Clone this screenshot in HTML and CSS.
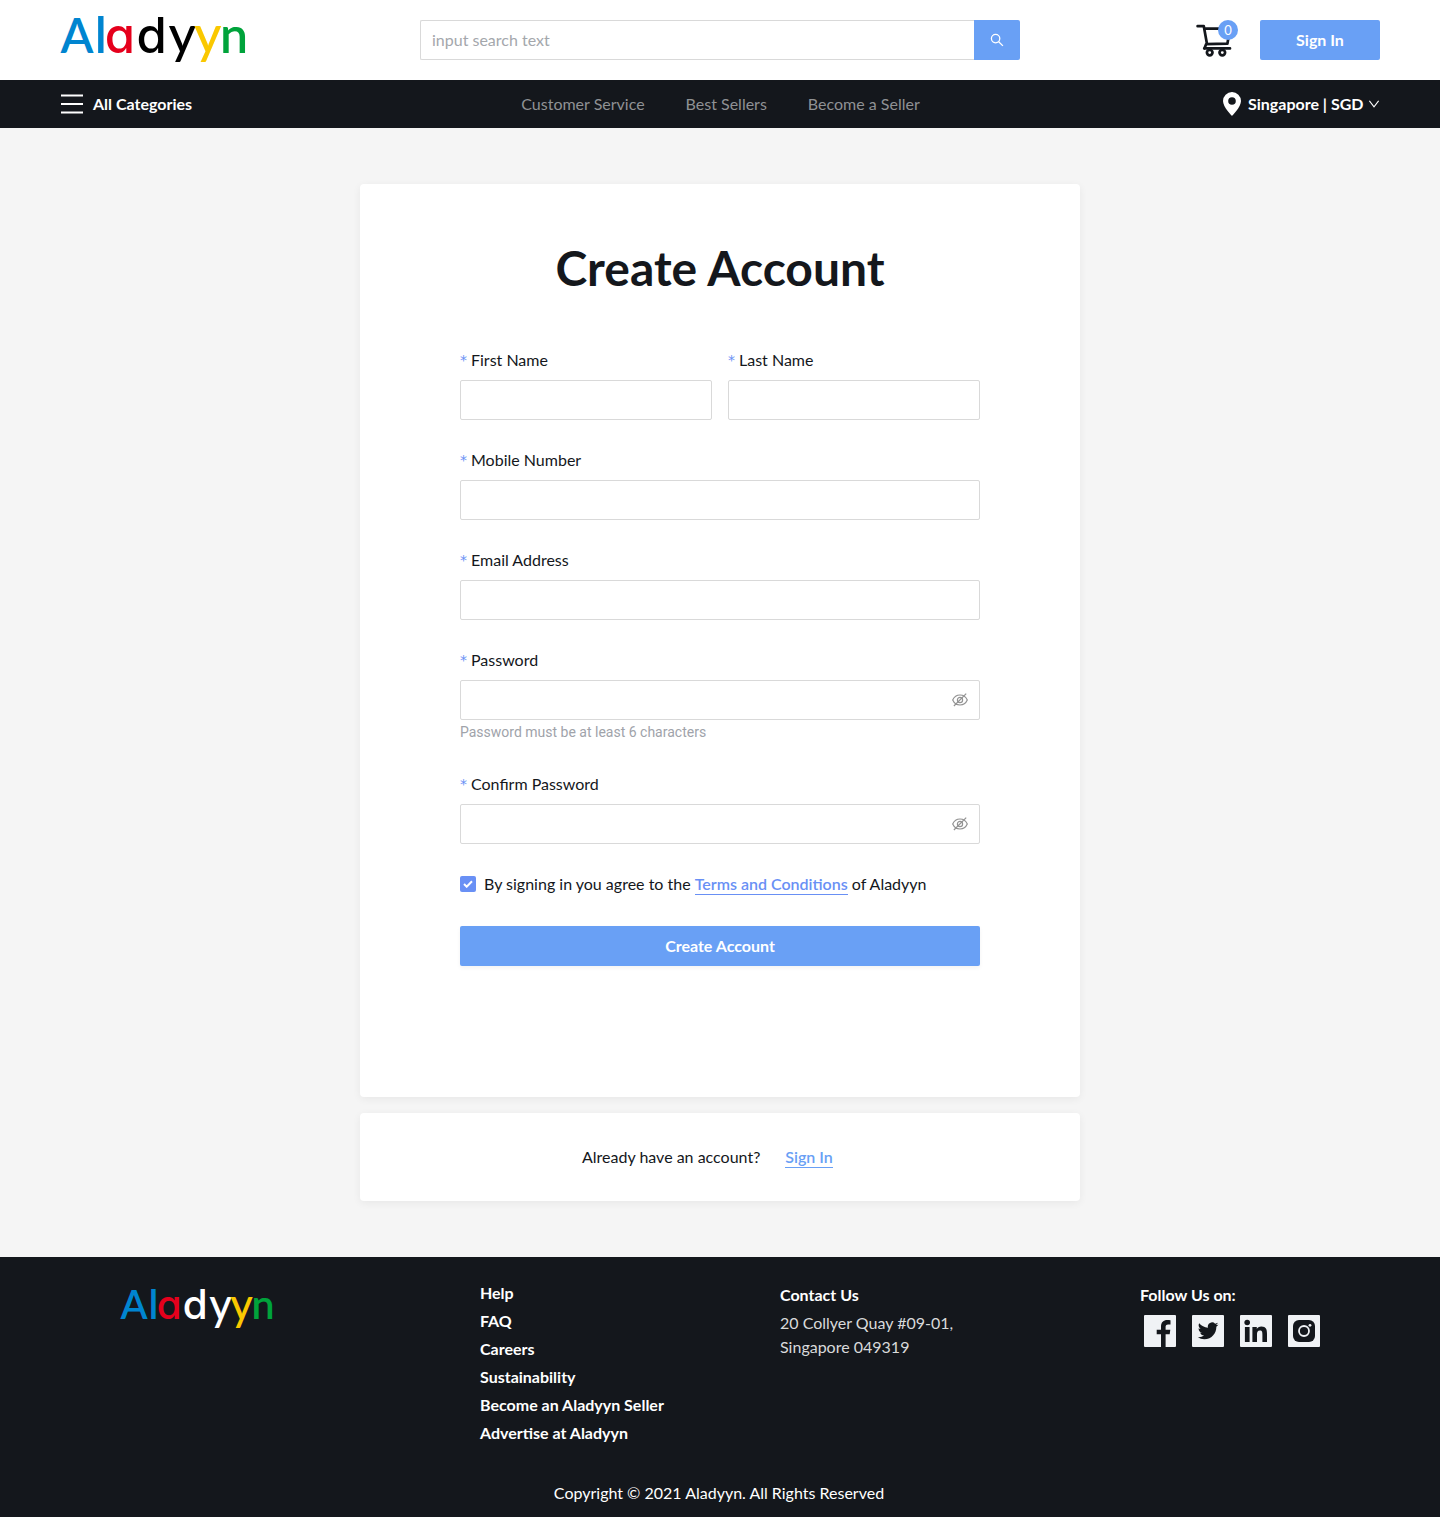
FILE: index.html
```html
<!DOCTYPE html>
<html lang="en">
<head>
<meta charset="utf-8">
<title>Create Account - Aladyyn</title>
<link rel="stylesheet" href="styles.css">
</head>
<body>
<header class="topbar">
  <svg class="logo" viewBox="0 0 186 48" width="186" height="48">
    <text y="36.5"><tspan class="blue" x="0.5">A</tspan><tspan class="blue tall" x="34.700">l</tspan><tspan class="red round" x="44.800">a</tspan><tspan class="ink round" x="76.400">d</tspan><tspan class="ink tail" x="108.400" y="37">y</tspan><tspan class="yellow tail" x="134" y="37">y</tspan><tspan class="green tall" x="160" y="36.5">n</tspan></text>
  </svg>
  <div class="search">
    <input class="search-input" type="text" placeholder="input search text">
    <button class="search-btn" aria-label="Search">
      <svg width="14" height="14" viewBox="0 0 14 14" fill="none" stroke="#fff" stroke-width="1.3"><circle cx="5.6" cy="5.6" r="4.2"/><path d="M8.7 8.7l4.2 4.2"/></svg>
    </button>
  </div>
  <div class="actions">
    <div class="cart">
      <svg width="36" height="34" viewBox="0 0 36 34" fill="none" stroke="#14171c" stroke-width="2.700" stroke-linecap="round" stroke-linejoin="round"><path d="M1.600 3.200h6.200l3.100 17.200M8.800 5.600H34l-2.600 15.100-21.200.4-1.800 4.400M8.200 25.400H34"/><circle cx="13.700" cy="29.600" r="2.800"/><circle cx="26.300" cy="29.600" r="2.800"/></svg>
      <span class="badge">0</span>
    </div>
    <button class="btn signin">Sign In</button>
  </div>
</header>
<nav class="nav">
  <div class="categories">
    <svg width="22" height="20" viewBox="0 0 22 20" stroke="#fff" stroke-width="2"><path d="M0 1.5h22M0 10h22M0 18.5h22"/></svg>
    <span>All Categories</span>
  </div>
  <div class="links"><a>Customer Service</a><a>Best Sellers</a><a>Become a Seller</a></div>
  <div class="region">
    <svg width="18" height="24" viewBox="0 0 18 24"><path fill="#fff" fill-rule="evenodd" d="M9 0a9 9 0 0 0-9 9c0 6 9 15 9 15s9-9 9-15a9 9 0 0 0-9-9zm0 5.2a3.8 3.8 0 1 1 0 7.6 3.8 3.8 0 0 1 0-7.6z"/></svg>
    <span class="region-name">Singapore | SGD</span>
    <svg width="10" height="8" viewBox="0 0 10 8" fill="none" stroke="#fff" stroke-width="1.1"><path d="M.4.8L5 6.8 9.6.8"/></svg>
  </div>
</nav>
<main class="main">
  <section class="card form-card">
    <h1>Create Account</h1>
    <form class="form">
      <div class="row">
        <div class="field"><label><i>*</i>First Name</label><div class="input"></div></div>
        <div class="field"><label><i>*</i>Last Name</label><div class="input"></div></div>
      </div>
      <div class="field"><label><i>*</i>Mobile Number</label><div class="input"></div></div>
      <div class="field"><label><i>*</i>Email Address</label><div class="input"></div></div>
      <div class="field">
        <label><i>*</i>Password</label>
        <div class="input"><svg class="eye" width="16" height="14" viewBox="0 0 16 14"><path d="M.7 7C2.2 3.7 4.6 2 8 2s5.800 1.700 7.300 5C13.800 10.300 11.400 12 8 12S2.200 10.300.7 7zM1.900 13L14.200.6"/><circle cx="8" cy="7" r="2.600"/></svg></div>
        <p class="hint">Password must be at least 6 characters</p>
      </div>
      <div class="field">
        <label><i>*</i>Confirm Password</label>
        <div class="input"><svg class="eye" width="16" height="14" viewBox="0 0 16 14"><path d="M.7 7C2.2 3.7 4.6 2 8 2s5.800 1.700 7.300 5C13.800 10.300 11.400 12 8 12S2.200 10.300.7 7zM1.900 13L14.200.6"/><circle cx="8" cy="7" r="2.600"/></svg></div>
      </div>
      <div class="agree">
        <span class="check"><svg width="10" height="8" viewBox="0 0 10 8" fill="none" stroke="#fff" stroke-width="2"><path d="M1 4l2.700 2.700L9 1.200"/></svg></span>
        <span>By signing in you agree to the <a class="link">Terms and Conditions</a> of Aladyyn</span>
      </div>
      <button class="btn submit" type="button">Create Account</button>
    </form>
  </section>
  <section class="card login-card"><span>Already have an account?</span><a class="link">Sign In</a></section>
</main>
<footer class="footer">
  <div class="footer-cols">
    <svg class="logo" viewBox="0 0 186 48" width="153" height="40">
      <text y="36.5"><tspan class="blue" x="0.5">A</tspan><tspan class="blue tall" x="34.700">l</tspan><tspan class="red round" x="44.800">a</tspan><tspan class="white round" x="76.400">d</tspan><tspan class="white tail" x="108.400" y="37">y</tspan><tspan class="yellow tail" x="134" y="37">y</tspan><tspan class="green tall" x="160" y="36.5">n</tspan></text>
    </svg>
    <div class="footer-links"><a>Help</a><a>FAQ</a><a>Careers</a><a>Sustainability</a><a>Become an Aladyyn Seller</a><a>Advertise at Aladyyn</a></div>
    <div class="contact"><strong>Contact Us</strong><p>20 Collyer Quay #09-01,<br>Singapore 049319</p></div>
    <div class="follow">
      <strong>Follow Us on:</strong>
      <div class="social">
        <svg width="32" height="32" viewBox="0 0 32 32"><rect class="tile" width="32" height="32" rx="1"/><path d="M17 32V19.200h-4.300v-4.400H17v-3.300C17 7.200 19.500 5 23.300 5c1.500 0 2.700.1 3.200.2v4.200h-2.400c-2 0-2.500 1-2.500 2.400v3h4.700l-.6 4.400h-4.100V32z"/></svg>
        <svg width="32" height="32" viewBox="0 0 32 32"><rect class="tile" width="32" height="32" rx="1"/><path transform="translate(5.800 5.500) scale(.86)" d="M23.950 4.570a10 10 0 0 1-2.820.775 4.960 4.960 0 0 0 2.160-2.720c-.95.555-2.010.96-3.130 1.180a4.920 4.920 0 0 0-8.380 4.480C7.690 8.100 4.070 6.130 1.640 3.160a4.820 4.820 0 0 0-.67 2.480c0 1.700.87 3.210 2.190 4.100a4.900 4.900 0 0 1-2.230-.62v.06a4.920 4.920 0 0 0 3.950 4.830 5 5 0 0 1-2.210.08 4.940 4.940 0 0 0 4.600 3.420A9.870 9.870 0 0 1 0 19.540a14 14 0 0 0 7.550 2.210c9.050 0 14-7.500 14-13.980 0-.21 0-.42-.02-.63a9.940 9.940 0 0 0 2.420-2.570z"/></svg>
        <svg width="32" height="32" viewBox="0 0 32 32"><rect class="tile" width="32" height="32" rx="1"/><circle cx="7.200" cy="7.500" r="2.800"/><path d="M4.900 12h4.700v15H4.900zM12.400 12h4.400v2.100c.7-1.300 2.300-2.500 4.600-2.500 4.700 0 5.600 3.100 5.600 7.100V27h-4.600v-7.300c0-1.900 0-4.100-2.500-4.100s-2.900 1.900-2.900 3.900V27h-4.600z"/></svg>
        <svg width="32" height="32" viewBox="0 0 32 32"><rect class="tile" width="32" height="32" rx="1"/><rect x="5" y="5" width="22" height="22" rx="6"/><circle cx="16" cy="16" r="5" fill="none" stroke="#f0f2f5" stroke-width="1.800"/><circle cx="22" cy="10.300" r="1.400" fill="#f0f2f5"/></svg>
      </div>
    </div>
  </div>
  <p class="copyright">Copyright © 2021 Aladyyn. All Rights Reserved</p>
</footer>
</body>
</html>
```
FILE: styles.css
```css
* { box-sizing: border-box; }
body { margin: 0; background: #f5f5f5; color: #14171c; font: 16px/24px Lato, sans-serif; }
button, input { font: inherit; border: 0; margin: 0; padding: 0; }
svg { display: block; flex: none; }
p, h1 { margin: 0; }

.logo { overflow: visible; }
.logo text { font: 600 48px Lato, sans-serif; }
.logo .round { font: 500 49px Inter, sans-serif; font-feature-settings: "cv11"; }
.logo .tall { font-size: 50px; }
.logo .tail { font-size: 53px; font-weight: 500; }
.blue { fill: #0085d0; }
.red { fill: #e5001c; }
.ink { fill: #000; }
.white { fill: #fff; }
.yellow { fill: #fac800; }
.green { fill: #00a33b; }

.topbar { height: 80px; padding: 0 60px; background: #fff; display: grid; grid-template-columns: 1fr 600px 1fr; align-items: center; }
.search { display: flex; height: 40px; }
.search-input { flex: 1; border: 1px solid #d9d9d9; border-right: 0; border-radius: 2px 0 0 2px; padding: 0 11px; }
.search-input::placeholder { color: #a4a7ac; opacity: 1; }
.search-btn { width: 46px; background: #69a0f5; border-radius: 0 2px 2px 0; display: flex; align-items: center; justify-content: center; }
.actions { display: flex; justify-content: flex-end; align-items: center; gap: 28px; }
.cart { position: relative; }
.badge { position: absolute; left: 22px; top: -3px; width: 20px; height: 20px; border-radius: 50%; background: #69a0f5; color: #fff; font-size: 13px; line-height: 20px; text-align: center; }
.btn { height: 40px; background: #69a0f5; color: #fff; font-weight: 700; border-radius: 2px; }
.signin { width: 120px; }

.nav { height: 48px; padding: 0 60px; background: #14171c; color: #fff; display: grid; grid-template-columns: 1fr auto 1fr; align-items: center; font-weight: 700; }
.categories { display: flex; align-items: center; gap: 10px; padding-left: 1px; }
.links { display: flex; gap: 41px; padding-left: 1px; font-weight: 400; color: #8f9194; }
.region { display: flex; justify-content: flex-end; align-items: center; padding-right: 1px; }
.region-name { margin: 0 5.5px 0 7px; }

.main { padding: 56px 0; display: flex; flex-direction: column; align-items: center; gap: 16px; }
.card { width: 720px; background: #fff; border-radius: 4px; box-shadow: 0 2px 8px rgba(0, 0, 0, .06); }
.form-card { height: 913px; padding: 55px 100px 0; }
h1 { font-size: 48px; line-height: 58px; font-weight: 700; text-align: center; }
.form { padding-top: 51px; display: flex; flex-direction: column; gap: 28px; }
.row { display: flex; gap: 16px; }
.field { flex: 1; }
label { display: flex; height: 24px; margin-bottom: 8px; }
label i { width: 11px; font: 14px/24px "DejaVu Sans", sans-serif; color: #6990f5; }
.input { height: 40px; border: 1px solid #d9d9d9; border-radius: 2px; display: flex; align-items: center; justify-content: flex-end; padding-right: 11px; }
.eye { fill: none; stroke: #929292; stroke-width: 1.2; }
.hint { height: 24px; font: 14px/24px Roboto, sans-serif; color: #a0a3aa; }
.agree { height: 24px; display: flex; align-items: center; gap: 8px; }
.check { width: 16px; height: 16px; border-radius: 2px; background: #6990f5; display: flex; align-items: center; justify-content: center; }
.link { padding-bottom: 1px; color: #6990f5; font-weight: 600; border-bottom: 1px solid #6990f5; }
.submit { margin-top: 2px; box-shadow: 0 2px 4px rgba(0, 0, 0, .05); }
.login-card { height: 88px; display: flex; align-items: center; padding-left: 222px; gap: 25px; }
.login-card .link { line-height: 20px; padding: 1px 0 0; color: #69a0f5; border-color: #69a0f5; }

.footer { height: 260px; background: #14171c; color: #fff; padding: 24px 120px 0; }
.footer-cols { height: 200px; display: grid; grid-template-columns: 360px 300px 360px 180px; align-items: start; }
.footer .logo { margin-top: 8px; }
.footer-links { display: flex; flex-direction: column; gap: 4px; font-weight: 700; }
.contact, .follow { padding-top: 2px; }
.contact p { margin-top: 4px; color: #d9dadb; }
.follow strong { display: block; }
.social { display: flex; gap: 16px; margin: 8px 0 0 4px; }
.social svg { fill: #14171c; }
.social .tile { fill: #f0f2f5; }
.copyright { text-align: center; padding-right: 2px; }
```
